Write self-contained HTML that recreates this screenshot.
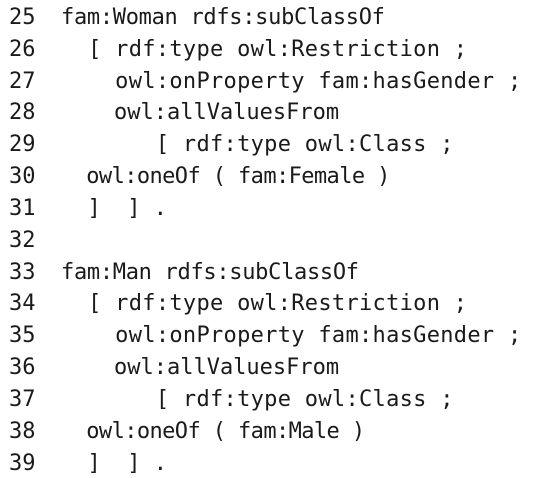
<!DOCTYPE html>
<html><head><style>
body{margin:0;width:543px;height:478px;background:#fff;overflow:hidden;position:relative;font-family:"DejaVu Sans Mono","Liberation Mono",monospace;font-size:22px;color:#1a1a1a}
div{position:absolute;white-space:pre;line-height:24px}
.n{left:9px}
.t{left:61px}
.a{letter-spacing:-0.3px}
.b{letter-spacing:0.3px}
.c{letter-spacing:-0.6px}
</style></head><body>
<div class="n" style="top:6px">25</div><div class="t a" style="top:6px">fam:Woman rdfs:subClassOf</div>
<div class="n" style="top:38px">26</div><div class="t b" style="top:38px">  [ rdf:type owl:Restriction ;</div>
<div class="n" style="top:70px">27</div><div class="t b" style="top:70px">    owl:onProperty fam:hasGender ;</div>
<div class="n" style="top:101px">28</div><div class="t" style="top:101px">    owl:allValuesFrom</div>
<div class="n" style="top:133px">29</div><div class="t b" style="top:133px">       [ rdf:type owl:Class ;</div>
<div class="n" style="top:165px">30</div><div class="t c" style="top:165px">  owl:oneOf ( fam:Female )</div>
<div class="n" style="top:197px">31</div><div class="t" style="top:197px">  ]  ] .</div>
<div class="n" style="top:229px">32</div>
<div class="n" style="top:261px">33</div><div class="t a" style="top:261px">fam:Man rdfs:subClassOf</div>
<div class="n" style="top:292px">34</div><div class="t b" style="top:292px">  [ rdf:type owl:Restriction ;</div>
<div class="n" style="top:324px">35</div><div class="t b" style="top:324px">    owl:onProperty fam:hasGender ;</div>
<div class="n" style="top:356px">36</div><div class="t" style="top:356px">    owl:allValuesFrom</div>
<div class="n" style="top:388px">37</div><div class="t b" style="top:388px">       [ rdf:type owl:Class ;</div>
<div class="n" style="top:420px">38</div><div class="t c" style="top:420px">  owl:oneOf ( fam:Male )</div>
<div class="n" style="top:452px">39</div><div class="t" style="top:452px">  ]  ] .</div>
</body></html>
